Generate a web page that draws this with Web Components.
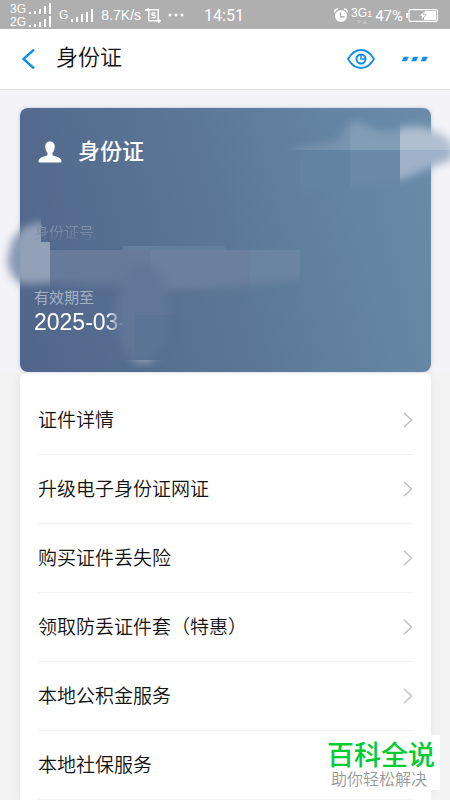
<!DOCTYPE html>
<html lang="zh-CN">
<head>
<meta charset="utf-8">
<meta name="viewport" content="width=device-width, initial-scale=1">
<title>身份证</title>
<style>
  html { background: #f3f3f3; }
  body { margin: 0; color: #111; font-family: "Liberation Sans", "Noto Sans CJK SC", sans-serif; }
</style>
</head>
<body>
<id-page></id-page>

<template id="t-page">
  <style>
    :host { display: block; min-height: 100vh; }
  </style>
  <status-bar></status-bar>
  <nav-bar>身份证</nav-bar>
  <main>
    <id-card>
      <span slot="title">身份证</span>
      <span slot="number-label">身份证号</span>
      <span slot="date-label">有效期至</span>
      <span slot="date">2025-03-</span>
    </id-card>
    <service-list>
      <service-item>证件详情</service-item>
      <service-item>升级电子身份证网证</service-item>
      <service-item>购买证件丢失险</service-item>
      <service-item>领取防丢证件套（特惠）</service-item>
      <service-item>本地公积金服务</service-item>
      <service-item>本地社保服务</service-item>
    </service-list>
  </main>
  <site-badge>
    百科全说
    <span slot="tagline">助你轻松解决</span>
  </site-badge>
</template>

<template id="t-status">
  <style>
    :host { display: grid; grid-template-columns: 1fr auto 1fr; align-items: center; height: 29px; padding: 0 12px 0 10px; box-sizing: border-box; background: #afafaf; color: #fff; font-size: 14px; line-height: 28px; }
    .left, .right { display: flex; align-items: center; }
    .right { justify-content: flex-end; gap: 3px; }
    .left { gap: 4px; }
    .stack { display: grid; grid-template-columns: auto auto; column-gap: 3px; align-items: center; font-size: 12px; line-height: 13px; padding-top: 2px; }
    .stack svg { margin-bottom: 2px; }
    .sim { display: flex; align-items: center; gap: 3px; font-size: 12px; margin-left: 2px; }
    .speed { margin-left: 2px; }
    .time { font-family: Roboto, sans-serif; font-size: 16px; padding-top: 2px; }
    .net { display: flex; flex-direction: column; align-items: center; font-size: 12px; line-height: 12px; }
    .net small { font-size: 9px; }
    .pct { font-size: 15px; font-family: Roboto, sans-serif; padding-top: 1px; }
    svg { display: block; fill: #fff; }
  </style>
  <div class="left">
    <div class="stack">
      <span>3G</span>
      <svg width="24" height="11"><path d="M0 9h2v2H0zM5 8h2v3H5zM10 6h2v5h-2zM15 3h2v8h-2zM20 0h2v11h-2z"/></svg>
      <span>2G</span>
      <svg width="24" height="11"><path d="M0 9h2v2H0zM5 8h2v3H5zM10 6h2v5h-2zM15 3h2v8h-2zM20 0h2v11h-2z"/></svg>
    </div>
    <div class="sim"><span>G</span>
      <svg width="24" height="13"><path d="M0 10h2v3H0zM5 8h2v5H5zM10 5h2v8h-2zM15 3h2v10h-2zM20 0h2v13h-2z"/></svg>
    </div>
    <span class="speed">8.7K/s</span>
    <svg width="16" height="15" viewBox="0 0 16 15"><path d="M0 1h14v11h2v1.600H3V3H0zM4.500 2.600V12h8V2.600z" fill-rule="evenodd"/><path d="M13 11h1.500v4H13zM2.500 0H4v3H2.500z"/><path d="M10.500 5H7.500c-1 0-1 2.200 0 2.200h2c1.200 0 1.200 2.400 0 2.400h-3" fill="none" stroke="#fff" stroke-width="1.400"/></svg>
    <svg width="22" height="6" viewBox="0 0 22 6"><circle cx="5" cy="3" r="1.500"/><circle cx="11" cy="3" r="1.500"/><circle cx="17" cy="3" r="1.500"/></svg>
  </div>
  <span class="time">14:51</span>
  <div class="right">
    <svg width="14" height="15" viewBox="0 0 14 15"><circle cx="7" cy="8" r="6"/><path d="M.6 4.500A3.200 3.200 0 0 1 4 1M13.400 4.500A3.200 3.200 0 0 0 10 1" fill="none" stroke="#fff" stroke-width="1.500"/><path d="M6.500 4.500v4.300h4" fill="none" stroke="#afafaf" stroke-width="1.400"/></svg>
    <div class="net"><span>3G<small>1</small></span>
      <svg width="12" height="4" viewBox="0 0 12 4"><path d="M1 0h4L3 4zM7 4l2-4 2 4z" fill="#c6c6c6"/></svg>
    </div>
    <span class="pct">47%</span>
    <svg width="32" height="13" viewBox="0 0 32 13"><rect x="3" y=".6" width="28.400" height="11.800" rx="1.500" fill="none" stroke="#fff" stroke-width="1.200"/><path d="M0 4h2v5H0z"/><path d="M18 2h12v9H18z"/><path d="M18.500 2L13 7h3l-1 4 5.500-5.500h-3z" stroke="#afafaf" stroke-width=".7"/></svg>
  </div>
</template>

<template id="t-nav">
  <style>
    :host { display: flex; align-items: center; height: 61px; padding: 0 17px 0 16px; box-sizing: border-box; background: #fff; border-bottom: 1px solid #e3e3e5; }
    h1 { flex: 1; margin: 0; padding: 0 0 2px 16px; font-size: 22px; line-height: 30px; font-weight: 350; }
    button { display: flex; align-items: center; justify-content: center; height: 40px; padding: 0; border: 0; background: none; color: #108ee9; }
    .back { width: 24px; }
    .eye, .more { width: 36px; }
    .more { margin-left: 18px; }
    svg { fill: none; stroke: currentColor; }
  </style>
  <button class="back" aria-label="返回"><svg width="14" height="20" viewBox="0 0 14 20"><path d="M13 .6L2.500 10 13 19.400" stroke-width="2.400"/></svg></button>
  <h1><slot></slot></h1>
  <button class="eye" aria-label="显示"><svg width="28" height="20" viewBox="0 0 28 20"><path d="M1 10C4.500 4 9 1 14 1s9.500 3 13 9c-3.500 6-8 9-13 9S4.500 16 1 10z" stroke-width="1.800"/><circle cx="14" cy="10" r="4.500" stroke-width="2"/><path d="M14 6v4h4" stroke-width="1.500"/></svg></button>
  <button class="more" aria-label="更多"><svg width="28" height="6" viewBox="0 0 28 6"><path d="M3 1h4.500L5.500 5H1zM12.500 1H17l-2 4h-4.500zM22 1h4.500l-2 4H20z" fill="currentColor" stroke="currentColor" stroke-width=".5"/></svg></button>
</template>

<template id="t-card">
  <style>
    :host { display: block; position: relative; padding: 18px 19px 0 20px; background: #f4f3f8; }
    .card { height: 264px; box-sizing: border-box; padding: 27px 14px; border-radius: 8px; background: linear-gradient(75deg, #50658a 0%, #5a7595 45%, #6484a4 78%, #6a8caa 100%); box-shadow: 0 0 4px #5c779855; color: #fff; }
    h2 { display: flex; align-items: center; gap: 16px; margin: 0; padding-left: 4px; font-size: 22px; line-height: 34px; font-weight: 500; }
    h2 svg { fill: #fff; }
    dl { position: relative; z-index: 1; margin: 53px 0 0; }
    dt { color: #a4b1c5; font-size: 15px; line-height: 22px; }
    dt.number { color: #7f91ac; height: 65px; -webkit-mask-image: linear-gradient(#000 6px, transparent 22px); mask-image: linear-gradient(#000 6px, transparent 22px); }
    dd { margin: 0; font-size: 23px; line-height: 26px; }
    dd span { display: inline-block; -webkit-mask-image: linear-gradient(90deg, #000 72px, transparent 90px); mask-image: linear-gradient(90deg, #000 72px, transparent 90px); }
    .smudge { position: absolute; inset: 0; width: 100%; height: 100%; pointer-events: none; }
  </style>
  <section class="card">
    <h2><svg width="24" height="22" viewBox="0 0 24 22"><path d="M12 .5c3.500 0 5 2.500 4.700 6-.2 2.300-1.200 4.300-2.200 5.300v1.700c0 1 1.200 1.400 3.500 2 3.500 1 5.500 2.700 5.500 4.500 0 1-.5 1.500-1.500 1.500H2c-1 0-1.500-.5-1.500-1.500 0-1.800 2-3.500 5.500-4.500 2.300-.6 3.500-1 3.500-2v-1.700c-1-1-2-3-2.200-5.300C7 3 8.500.5 12 .5z"/></svg><slot name="title"></slot></h2>
    <dl>
      <dt class="number"><slot name="number-label"></slot></dt>
      <dt><slot name="date-label"></slot></dt>
      <dd><span><slot name="date"></slot></span></dd>
    </dl>
  </section>
  <svg class="smudge" viewBox="0 90 450 282" preserveAspectRatio="none" aria-hidden="true">
    <defs>
      <filter id="soft" x="-20%" y="-20%" width="140%" height="140%"><feGaussianBlur stdDeviation="4"/></filter>
      <mask id="right" maskUnits="userSpaceOnUse" x="270" y="100" width="180" height="110" style="mask-type:alpha"><path filter="url(#soft)" d="M290 151L338 141 346 126 358 121 376 130 392 132 404 127 425 127 442 134 454 144 452 160 432 167 400 180 350 187 290 193z"/></mask>
      <mask id="left" maskUnits="userSpaceOnUse" x="0" y="200" width="310" height="110" style="mask-type:alpha"><path filter="url(#soft)" d="M44 221L25 226 12 240 7 262 13 278 22 284 50 283 120 286 160 291 225 288 300 279 320 260 310 236 60 236 46 236z"/></mask>
      <mask id="drop" maskUnits="userSpaceOnUse" x="100" y="240" width="90" height="130" style="mask-type:alpha"><ellipse filter="url(#soft)" cx="143" cy="314" rx="27" ry="49"/></mask>
    </defs>
    <g mask="url(#right)">
      <path fill="#7994b0" d="M280 110h70v40h-70z"/><path fill="#829db6" d="M350 110h50v40h-50z"/>
      <path fill="#b0bfd0" d="M400 110h50v40h-50z"/><path fill="#6383a3" d="M300 150h50v50h-50z"/>
      <path fill="#6b89a8" d="M350 150h50v50h-50z"/><path fill="#9fb2c9" d="M400 150h50v50h-50z"/>
    </g>
    <g mask="url(#left)">
      <path fill="#8798b3" d="M0 200h20v100H0z"/><path fill="#93a1b8" d="M20 200h21v50H20z"/><path fill="#93a1b8" d="M20 242h30v60H20z"/>
      <path fill="#677a9a" d="M50 250h100v50H50z"/><path fill="#6b7f9f" d="M150 250h100v50H150z"/><path fill="#6c84a3" d="M250 250h50v50h-50z"/>
      <path fill="#647e9e" d="M123 246h102v4H123z"/>
    </g>
    <g mask="url(#drop)">
      <path fill="#61779a" d="M100 260h35v55h-35z"/><path fill="#607799" d="M135 260h50v55h-50z"/>
      <path fill="#617798" d="M100 315h35v45h-35z"/><path fill="#5a7495" d="M135 315h50v45h-50z"/><path fill="#91a0b7" d="M115 360h55v8h-55z"/>
    </g>
  </svg>
</template>

<template id="t-list">
  <style>
    :host { display: block; margin: 0 19px 0 20px; padding: 14px 18px 0; background: #fff; border-radius: 8px 8px 0 0; box-shadow: 0 0 12px #00000010; }
  </style>
  <slot></slot>
</template>

<template id="t-item">
  <style>
    :host { display: block; border-bottom: 1px solid #f3f3f3; }
    button { display: flex; width: 100%; height: 68px; align-items: center; justify-content: space-between; padding: 0; border: 0; background: none; color: #111; font: inherit; font-size: 19px; font-weight: 350; text-align: left; }
    span { padding-bottom: 4px; }
  </style>
  <button><span><slot></slot></span><svg width="10" height="16" viewBox="0 0 10 16" fill="none" stroke="#c4c4ca" stroke-width="1.600" aria-hidden="true"><path d="M1 .8L8.500 8 1 15.200"/></svg></button>
</template>

<template id="t-badge">
  <style>
    :host { position: fixed; right: 10px; bottom: 10px; display: flex; flex-direction: column; align-items: center; box-sizing: border-box; padding: 6px 5px 0; height: 55px; background: #fff; color: #00cc33; font-size: 27px; line-height: 30px; font-weight: 500; }
    .tag { color: #999; font-size: 16px; line-height: 17px; font-weight: 350; padding-right: 4px; }
  </style>
  <span><slot></slot></span>
  <span class="tag"><slot name="tagline"></slot></span>
</template>

<script>
  class TemplateElement extends HTMLElement {
    constructor() {
      super();
      const source = document.getElementById(this.constructor.template);
      this.attachShadow({ mode: "open" }).append(source.content.cloneNode(true));
    }
  }
  const parts = {
    "status-bar": "t-status",
    "nav-bar": "t-nav",
    "id-card": "t-card",
    "service-list": "t-list",
    "service-item": "t-item",
    "site-badge": "t-badge",
    "id-page": "t-page"
  };
  for (const [name, template] of Object.entries(parts)) {
    customElements.define(name, class extends TemplateElement {
      static template = template;
    });
  }
</script>
</body>
</html>
